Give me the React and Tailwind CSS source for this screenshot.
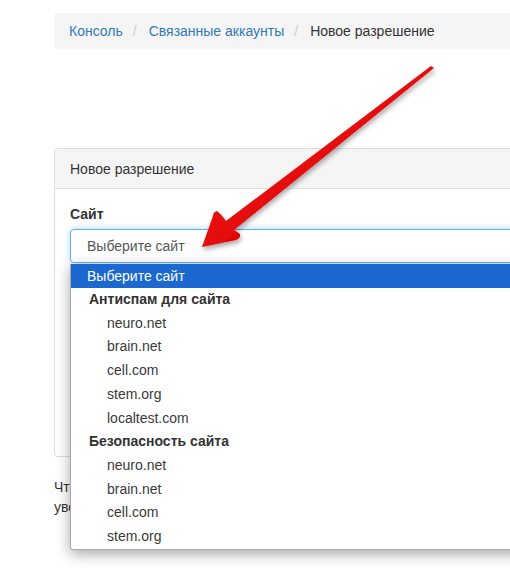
import React from "react";

const groups = [
  { label: "Антиспам для сайта", items: ["neuro.net", "brain.net", "cell.com", "stem.org", "localtest.com"] },
  { label: "Безопасность сайта", items: ["neuro.net", "brain.net", "cell.com", "stem.org"] },
];

function Breadcrumb() {
  const crumbs = ["Консоль", "Связанные аккаунты"];
  return (
    <ol className="flex h-9 items-center rounded bg-[#f5f5f5] px-[15px] text-[14px] leading-5">
      {crumbs.map((c) => (
        <li key={c} className="flex items-center">
          <span className="text-[#337ab7]">{c}</span>
          <span className="pl-[10px] pr-[12px] text-[#ccc]">/</span>
        </li>
      ))}
      <li className="text-[#333]">Новое разрешение</li>
    </ol>
  );
}

function Dropdown() {
  return (
    <div className="absolute left-0 top-[35px] z-10 w-[640px] overflow-hidden rounded-b-[3px] border border-t-0 border-[#aaa] bg-white text-[14px] leading-[23.7px] text-[#333] shadow-[0_4px_14px_rgba(0,0,0,0.35)]">
      <div className="bg-[#1a68d0] pl-[16px] leading-[24px] text-white">Выберите сайт</div>
      {groups.map((g) => (
        <div key={g.label}>
          <div className="pl-[18px] font-bold">{g.label}</div>
          {g.items.map((i) => (
            <div key={g.label + i} className="pl-[36px] text-[#3a3a3a]">
              {i}
            </div>
          ))}
        </div>
      ))}
    </div>
  );
}

function Arrow() {
  return (
    <svg className="pointer-events-none absolute left-0 top-0 z-20" width="510" height="568" viewBox="0 0 510 568">
      <defs>
        <linearGradient id="ar" x1="0" y1="0" x2="1" y2="1">
          <stop offset="0" stopColor="#ff3b3b" />
          <stop offset="0.6" stopColor="#e00000" />
          <stop offset="1" stopColor="#b80000" />
        </linearGradient>
        <filter id="sh" x="-20%" y="-20%" width="140%" height="140%">
          <feDropShadow dx="1" dy="3" stdDeviation="2.5" floodColor="#000" floodOpacity="0.35" />
        </filter>
      </defs>
      <path
        d="M431 66 L226 221 Q220 213 217 211 Q213 212 213 216 L202 247 L236 240 Q241 238 240 234 Q237 232 234 230 L434 68 Z"
        fill="url(#ar)"
        filter="url(#sh)"
      />
    </svg>
  );
}

export default function App() {
  return (
    <div
      className="relative h-[568px] w-[510px] overflow-hidden bg-white"
      style={{ fontFamily: '"Liberation Sans", Arial, sans-serif' }}
    >
      <div className="w-[700px] pl-[54px] pt-[13px] text-[14px] leading-5 text-[#333]">
        <Breadcrumb />
        <div className="mt-[99px] rounded border border-[#ddd] bg-white">
          <div className="h-[40px] rounded-t border-b border-[#ddd] bg-[#f5f5f5] px-[15px] py-[10px]">Новое разрешение</div>
          <div className="p-[15px]">
            <div className="mb-[5px] font-bold">Сайт</div>
            <div className="relative">
              <div className="flex h-[34px] items-center rounded border border-[#66afe9] pl-[16px] text-[#555] shadow-[0_0_6px_rgba(102,175,233,0.5)]">
                Выберите сайт
              </div>
              <Dropdown />
            </div>
            <div className="mt-[15px] mb-[5px] h-5" />
            <div className="h-[34px] rounded border border-[#ccc]" />
            <div className="mt-[15px] h-[20px]" />
            <button className="mt-[35px] h-[34px] rounded border border-[#2e6da4] bg-[#337ab7] px-3 text-white">
              Сохранить
            </button>
          </div>
        </div>
        <p className="mt-[20px] w-[440px]">
          Чтобы получить доступ, владелец сайта получит
          <br />
          уведомление по почте.
        </p>
      </div>
      <Arrow />
    </div>
  );
}
